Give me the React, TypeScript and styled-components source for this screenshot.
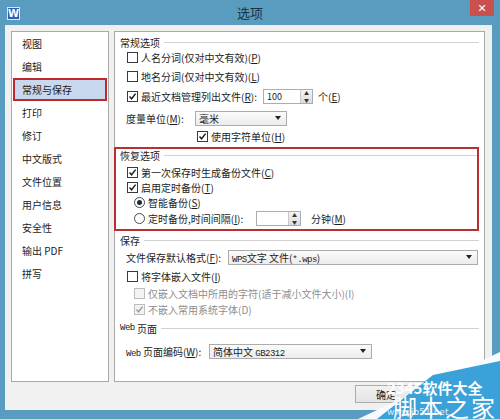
import styled, { createGlobalStyle } from "styled-components";

const GlobalStyle = createGlobalStyle`
  html, body {
    margin: 0;
    padding: 0;
    background: #5a9bc0;
  }
  body {
    font-family: "Noto Sans CJK SC", "DejaVu Sans", sans-serif;
    font-size: 10px;
    color: #1c1c1c;
  }
`;

const Window = styled.div`
  position: relative;
  width: 500px;
  height: 419px;
  background: #5a9bc0;
  display: flex;
  flex-direction: column;
  overflow: hidden;
`;

const TitleBar = styled.div`
  height: 25px;
  display: flex;
  align-items: center;
  position: relative;
`;

const AppIcon = styled.div`
  width: 13px;
  height: 13px;
  margin-left: 7px;
  margin-top: 1px;
  background: #2a62b9;
  border: 1px solid #d8e6f5;
  box-sizing: border-box;
  color: #fff;
  font: bold 10px "DejaVu Sans", sans-serif;
  display: flex;
  align-items: center;
  justify-content: center;
`;

const Title = styled.div`
  flex: 1;
  text-align: center;
  font-size: 13px;
  color: #1b3142;
  margin-right: 20px;
`;

const CloseButton = styled.div`
  position: absolute;
  top: 0;
  right: 6px;
  width: 24px;
  height: 16px;
  background: #c9504d;
  color: #fff;
  font: 11px "DejaVu Sans", sans-serif;
  display: flex;
  align-items: center;
  justify-content: center;
`;

const Client = styled.div`
  margin: 0 8px 9px 5px;
  flex: 1;
  background: #f0f0f0;
  border-top: 1px solid #e4eef4;
  box-sizing: border-box;
  padding: 5px 7px 0 6px;
  display: flex;
  flex-direction: column;
`;

const Panels = styled.div`
  display: flex;
  gap: 5px;
  height: 351px;
`;

const NavPanel = styled.div`
  width: 98px;
  background: #fff;
  border: 1px solid #a9a9a9;
  box-sizing: border-box;
  padding-top: 0;
`;

const NavItem = styled.div<{ $active?: boolean }>`
  height: 23px;
  margin: 0 1px;
  border: 2px solid ${({ $active }) => ($active ? "#c0272d" : "transparent")};
  background: ${({ $active }) => ($active ? "#c8d8ef" : "transparent")};
  box-sizing: border-box;
  padding-left: 7px;
  display: flex;
  align-items: center;
  font-size: 10px;
`;

const MainPanel = styled.div`
  flex: 1;
  background: #fff;
  border: 1px solid #a9a9a9;
  box-sizing: border-box;
  padding: 4px 5px 0 5px;
`;

const Row = styled.div<{ $mt?: number; $indent?: number }>`
  display: flex;
  align-items: center;
  height: 12px;
  margin-top: ${({ $mt }) => $mt ?? 0}px;
  padding-left: ${({ $indent }) => $indent ?? 0}px;
  white-space: nowrap;
`;

const GroupHeader = styled(Row)`
  &::after {
    content: "";
    flex: 1;
    height: 0;
    border-top: 1px solid #d2d2d2;
    margin-left: 4px;
    margin-top: 1px;
  }
`;

const RecoveryBox = styled.div`
  margin: 5px 0 0 -6px;
  border: 2px solid #bb2e31;
  padding: 0 0 5px 4px;
  height: 84px;
  box-sizing: border-box;
`;

const Label = styled.span<{ $w?: number; $muted?: boolean }>`
  display: inline-block;
  width: ${({ $w }) => ($w ? `${$w}px` : "auto")};
  color: ${({ $muted }) => ($muted ? "#8e8e8e" : "inherit")};
`;

const BoxMark = styled.span<{ $disabled?: boolean }>`
  width: 11px;
  height: 11px;
  box-sizing: border-box;
  border: 1px solid ${({ $disabled }) => ($disabled ? "#bdbdbd" : "#3a3a3a")};
  background: ${({ $disabled }) => ($disabled ? "#f3f3f3" : "#fff")};
  margin-right: 3px;
  display: flex;
  align-items: center;
  justify-content: center;
  flex-shrink: 0;
`;

const RadioMark = styled.span<{ $on?: boolean }>`
  width: 11px;
  height: 11px;
  box-sizing: border-box;
  border-radius: 50%;
  border: 1px solid #4a4a4a;
  background: #fff;
  margin-right: 3px;
  display: flex;
  align-items: center;
  justify-content: center;
  &::after {
    content: "";
    width: 5px;
    height: 5px;
    border-radius: 50%;
    background: ${({ $on }) => ($on ? "#1e2a3a" : "transparent")};
  }
`;

const Field = styled.div<{ $w: number }>`
  width: ${({ $w }) => $w}px;
  height: 15px;
  border: 1px solid #abadb3;
  box-sizing: border-box;
  background: #fff;
  display: flex;
  align-items: stretch;
  flex-shrink: 0;
`;

const FieldText = styled.span`
  flex: 1;
  display: flex;
  align-items: center;
  padding-left: 3px;
  font-size: 9px;
`;

const SpinButtons = styled.div`
  width: 11px;
  border-left: 1px solid #c8c8c8;
  background: linear-gradient(#f4f4f4, #dcdcdc);
  display: flex;
  flex-direction: column;
  align-items: center;
  justify-content: space-around;
  font-size: 5px;
  line-height: 5px;
  color: #333;
`;

const Select = styled.div<{ $w: number }>`
  width: ${({ $w }) => $w}px;
  height: 15px;
  border: 1px solid #acacac;
  box-sizing: border-box;
  background: linear-gradient(#fbfbfb, #ececec);
  display: flex;
  align-items: center;
  justify-content: space-between;
  padding: 0 5px 0 3px;
  flex-shrink: 0;
`;

const Arrow = styled.span`
  width: 0;
  height: 0;
  border-left: 3px solid transparent;
  border-right: 3px solid transparent;
  border-top: 4px solid #222;
`;

const Mono = styled.span`
  font-family: "Liberation Mono", monospace;
  font-size: 9px;
  letter-spacing: -0.5px;
`;

const ButtonRow = styled.div`
  display: flex;
  justify-content: flex-end;
  gap: 6px;
  margin-top: 3px;
  padding-right: 0;
`;

const DialogButton = styled.div`
  width: 62px;
  height: 18px;
  border: 1px solid #acacac;
  background: linear-gradient(#f2f2f2, #e3e3e3);
  box-sizing: border-box;
  display: flex;
  align-items: center;
  justify-content: center;
`;

const Watermark = styled.svg`
  position: absolute;
  right: 0;
  bottom: 0;
`;

const Check = ({ muted }: { muted?: boolean }) => (
  <svg width="9" height="9" viewBox="0 0 9 9">
    <path
      d="M1.5 4.5 L3.6 6.8 L7.6 1.6"
      fill="none"
      stroke={muted ? "#9a9a9a" : "#1a1a1a"}
      strokeWidth="1.4"
    />
  </svg>
);

const CheckBox = ({ checked, disabled }: { checked?: boolean; disabled?: boolean }) => (
  <BoxMark $disabled={disabled}>{checked && <Check muted={disabled} />}</BoxMark>
);

const Spinner = ({ w, value }: { w: number; value?: string }) => (
  <Field $w={w}>
    <FieldText>{value}</FieldText>
    <SpinButtons>
      <span>▲</span>
      <span>▼</span>
    </SpinButtons>
  </Field>
);

const navItems = [
  "视图",
  "编辑",
  "常规与保存",
  "打印",
  "修订",
  "中文版式",
  "文件位置",
  "用户信息",
  "安全性",
  "输出 PDF",
  "拼写",
];

export default function App() {
  return (
    <>
      <GlobalStyle />
      <Window>
        <TitleBar>
          <AppIcon>W</AppIcon>
          <Title>选项</Title>
          <CloseButton>✕</CloseButton>
        </TitleBar>
        <Client>
          <Panels>
            <NavPanel>
              {navItems.map((item) => (
                <NavItem key={item} $active={item === "常规与保存"}>
                  {item}
                </NavItem>
              ))}
            </NavPanel>
            <MainPanel>
              <GroupHeader>常规选项</GroupHeader>
              <Row $mt={3} $indent={7}>
                <CheckBox />
                人名分词(仅对中文有效)(<u>P</u>)
              </Row>
              <Row $mt={7} $indent={7}>
                <CheckBox />
                地名分词(仅对中文有效)(<u>L</u>)
              </Row>
              <Row $mt={8} $indent={7}>
                <CheckBox checked />
                <Label $w={122}>
                  最近文档管理列出文件(<u>R</u>):
                </Label>
                <Spinner w={50} value="100" />
                <Label style={{ marginLeft: 5 }}>
                  个(<u>E</u>)
                </Label>
              </Row>
              <Row $mt={10} $indent={6}>
                <Label $w={69}>
                  度量单位(<u>M</u>):
                </Label>
                <Select $w={92}>
                  <span>毫米</span>
                  <Arrow />
                </Select>
              </Row>
              <Row $mt={6} $indent={77}>
                <CheckBox checked />
                使用字符单位(<u>H</u>)
              </Row>

              <RecoveryBox>
                <GroupHeader>恢复选项</GroupHeader>
                <Row $mt={5} $indent={7}>
                  <CheckBox checked />
                  第一次保存时生成备份文件(<u>C</u>)
                </Row>
                <Row $mt={3} $indent={7}>
                  <CheckBox checked />
                  启用定时备份(<u>T</u>)
                </Row>
                <Row $mt={3} $indent={14}>
                  <RadioMark $on />
                  智能备份(<u>S</u>)
                </Row>
                <Row $mt={4} $indent={14}>
                  <RadioMark />
                  <Label $w={108}>
                    定时备份,时间间隔(<u>I</u>):
                  </Label>
                  <Spinner w={45} />
                  <Label style={{ marginLeft: 10 }}>
                    分钟(<u>M</u>)
                  </Label>
                </Row>
              </RecoveryBox>

              <GroupHeader $mt={3}>保存</GroupHeader>
              <Row $mt={5} $indent={6}>
                <Label $w={102}>
                  文件保存默认格式(<u>F</u>):
                </Label>
                <Select $w={250}>
                  <span>
                    <Mono>WPS</Mono>文字 文件(<Mono>*.wps</Mono>)
                  </span>
                  <Arrow />
                </Select>
              </Row>
              <Row $mt={7} $indent={7}>
                <CheckBox />
                将字体嵌入文件(<u>I</u>)
              </Row>
              <Row $mt={5} $indent={14}>
                <CheckBox disabled />
                <Label $muted>仅嵌入文档中所用的字符(适于减小文件大小)(I)</Label>
              </Row>
              <Row $mt={4} $indent={14}>
                <CheckBox checked disabled />
                <Label $muted>不嵌入常用系统字体(D)</Label>
              </Row>

              <GroupHeader $mt={7}>
                <Mono>Web</Mono>&nbsp;页面
              </GroupHeader>
              <Row $mt={11} $indent={6}>
                <Label $w={83}>
                  <Mono>Web</Mono> 页面编码(<u>W</u>):
                </Label>
                <Select $w={163}>
                  <span>
                    简体中文 <Mono>GB2312</Mono>
                  </span>
                  <Arrow />
                </Select>
              </Row>
            </MainPanel>
          </Panels>
          <ButtonRow>
            <DialogButton>确定</DialogButton>
            <DialogButton>取消</DialogButton>
          </ButtonRow>
        </Client>

        <Watermark width="145" height="70" viewBox="0 0 145 70">
          <polygon points="3,70 145,3 145,70" fill="#f7fbfd" />
          <polygon points="22,70 78,26 145,12 145,70" fill="#3aa1d9" />
          <text
            x="32"
            y="45"
            fill="#ffffff"
            fontSize="15"
            fontWeight="bold"
            fontFamily="Noto Sans CJK SC, sans-serif"
          >
            2345软件大全
          </text>
          <text
            x="32"
            y="66"
            fill="#d8eefa"
            fontSize="9"
            fontFamily="DejaVu Sans, sans-serif"
          >
            www.jb51.net
          </text>
          <text
            x="38"
            y="68"
            fill="#ffffff"
            fontSize="24"
            fontFamily="Noto Sans CJK SC, sans-serif"
            letterSpacing="2"
          >
            脚本之家
          </text>
        </Watermark>
      </Window>
    </>
  );
}
